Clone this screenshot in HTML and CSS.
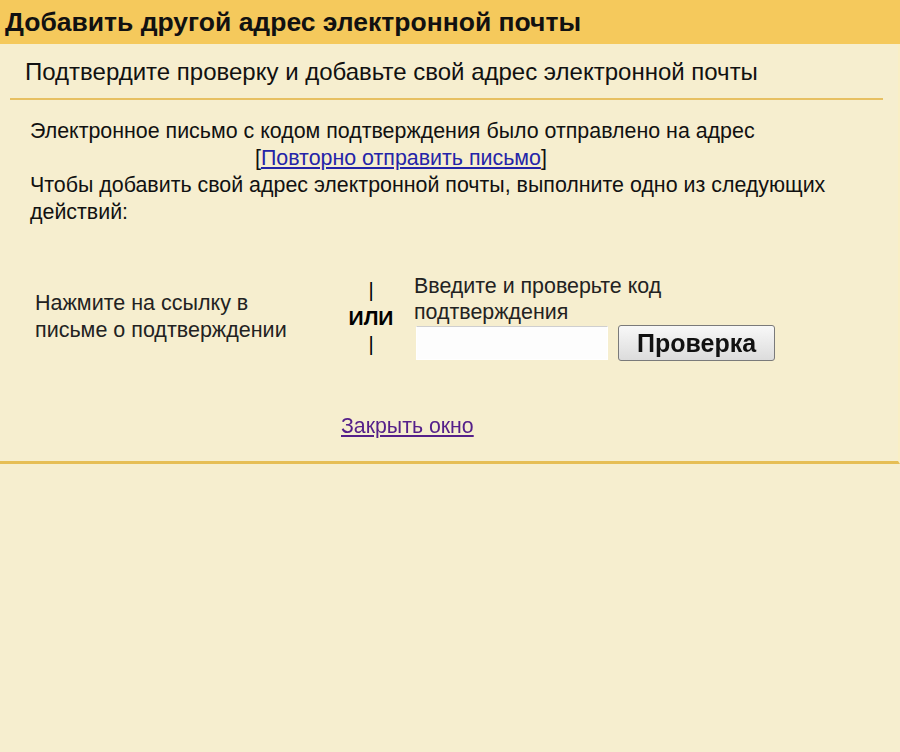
FILE: index.html
```html
<!DOCTYPE html>
<html lang="ru">
<head>
  <meta charset="UTF-8">
  <meta name="viewport" content="width=device-width, initial-scale=1.0">
  <title>Добавить другой адрес электронной почты</title>
  <link rel="stylesheet" href="styles.css">
</head>
<body>
  <div class="header">
    <h1>Добавить другой адрес электронной почты</h1>
  </div>

  <div class="panel">
    <h2 class="subtitle">Подтвердите проверку и добавьте свой адрес электронной почты</h2>

    <div class="content">
      <p class="message">
        Электронное письмо с кодом подтверждения было отправлено на адрес<br>
        <span class="resend">[<a href="#">Повторно отправить письмо</a>]</span><br>
        Чтобы добавить свой адрес электронной почты, выполните одно из следующих действий:
      </p>

      <div class="options">
        <div class="opt-link">Нажмите на ссылку в<br>письме о подтверждении</div>
        <div class="or">
          <span>|</span>
          <b>ИЛИ</b>
          <span>|</span>
        </div>
        <div class="opt-code">
          <label for="code">Введите и проверьте код<br>подтверждения</label>
          <div class="code-row">
            <input id="code" type="text" autofocus>
            <button type="button">Проверка</button>
          </div>
        </div>
      </div>

      <div class="close">
        <a href="#" class="visited">Закрыть окно</a>
      </div>
    </div>
  </div>

  <div class="rest"></div>
</body>
</html>
```

FILE: styles.css
```css
html, body {
  margin: 0;
  padding: 0;
  background-color: #f6eecf;
}
body {
  font-family: "Liberation Sans", Arial, sans-serif;
  color: #111;
  min-height: 752px;
}
.header {
  background-color: #f5c95c;
  height: 44px;
  padding-left: 5px;
}
h1 {
  margin: 0;
  font-size: 26.5px;
  line-height: 44px;
  font-weight: bold;
}
.panel {
  padding: 0 15px 0 10px;
  border-bottom: 3px solid #e6be55;
  border-right: 2px solid #f9efc6;
}
.subtitle {
  margin: 0;
  padding: 16px 0 0 15px;
  height: 38px;
  font-size: 24px;
  font-weight: normal;
  line-height: 24px;
  border-bottom: 2px solid #e7c062;
}
.content {
  padding: 18px 0 22px 20px;
}
.message {
  margin: 0;
  font-size: 21.4px;
  line-height: 27px;
  padding-right: 30px;
}
.resend {
  padding-left: 225px;
}
a {
  color: #2424a8;
}
a.visited {
  color: #55208a;
}
.options {
  display: flex;
  align-items: center;
  margin-top: 47px;
}
.opt-link {
  width: 308px;
  padding-left: 5px;
  font-size: 21.5px;
  line-height: 27px;
  color: #222;
}
.or {
  display: flex;
  flex-direction: column;
  align-items: center;
  width: 56px;
  font-size: 20px;
  line-height: 27px;
  color: #000;
}
.or b {
  font-size: 21px;
}
.opt-code {
  padding-left: 15px;
  font-size: 21.4px;
  line-height: 26px;
  color: #222;
}
.code-row {
  display: flex;
  align-items: center;
  gap: 10px;
}
input {
  width: 192px;
  height: 34px;
  box-sizing: border-box;
  border: 1px solid #fff;
  border-top-color: #cfcfcf;
  background-color: #fdfdfd;
  margin-left: 2px;
  padding-left: 4px;
  font-size: 24px;
  caret-color: #000;
  outline: none;
}
button {
  width: 157px;
  height: 36px;
  font-family: "Liberation Sans", Arial, sans-serif;
  font-size: 25px;
  font-weight: bold;
  color: #111;
  border: 1px solid #7a7a7a;
  border-radius: 3px;
  background: linear-gradient(#f8f8f8, #dcdcdc);
}
.close {
  margin-top: 53px;
  padding-left: 311px;
  font-size: 21.3px;
}
```
